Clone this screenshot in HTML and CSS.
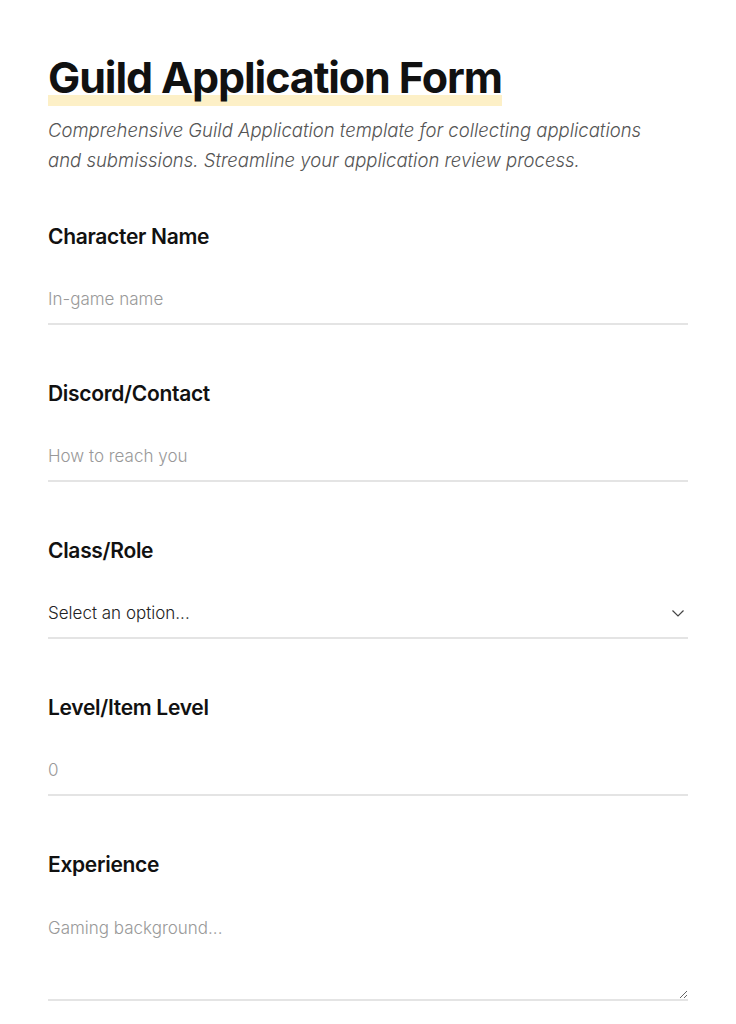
FILE: index.html
```html
<!DOCTYPE html>
<html lang="en">
<head>
    <meta charset="UTF-8">
    <meta name="viewport" content="width=device-width, initial-scale=1.0">
    <title>Guild Application Form</title>
    <link rel="stylesheet" href="styles.css">
</head>
<body>
    <div class="form-wrap">
        <h1 class="form-title"><span>Guild Application Form</span></h1>
        <p class="form-desc">Comprehensive Guild Application template for collecting applications and submissions. Streamline your application review process.</p>

        <form class="app-form">
            <div class="field">
                <label for="char-name">Character Name</label>
                <input type="text" id="char-name" placeholder="In-game name">
            </div>

            <div class="field">
                <label for="contact">Discord/Contact</label>
                <input type="text" id="contact" placeholder="How to reach you">
            </div>

            <div class="field">
                <label for="class-role">Class/Role</label>
                <div class="select-box">
                    <select id="class-role">
                        <option>Select an option...</option>
                        <option>Tank</option>
                        <option>Healer</option>
                        <option>DPS</option>
                    </select>
                    <svg class="chevron" width="14" height="14" viewBox="0 0 14 14"><path d="M1.5 4.5 L7 10 L12.5 4.5" fill="none" stroke="#444" stroke-width="1.2"/></svg>
                </div>
            </div>

            <div class="field">
                <label for="level">Level/Item Level</label>
                <input type="number" id="level" placeholder="0">
            </div>

            <div class="field">
                <label for="experience">Experience</label>
                <textarea id="experience" placeholder="Gaming background..."></textarea>
            </div>
        </form>
    </div>
</body>
</html>
```

FILE: styles.css
```css
body {
    margin: 0;
    background: #fff;
    font-family: Inter, "Noto Sans", sans-serif;
    color: #111;
}
.form-wrap {
    padding: 50px 48px;
}
.form-title {
    margin: 0;
    font-size: 43px;
    font-weight: 700;
    letter-spacing: -1.1px;
    line-height: 54px;
}
.form-title span {
    padding-bottom: 3px;
    background: linear-gradient(to top, #fdf0c7 11px, transparent 11px);
}
.form-desc {
    margin: 11px 0 0;
    max-width: 625px;
    font-size: 18.5px;
    font-style: italic;
    line-height: 30px;
    color: #555;
    font-weight: 300;
}
.app-form {
    margin-top: 47px;
}
.field {
    display: flex;
    flex-direction: column;
    margin-bottom: 54px;
}
.field label {
    font-size: 21px;
    font-weight: 600;
    letter-spacing: -0.3px;
    line-height: 30px;
}
.field input,
.field select,
.field textarea {
    font-family: inherit;
    font-size: 17px;
    font-weight: 300;
    color: #222;
    border: none;
    border-bottom: 2px solid #e4e4e4;
    outline: none;
    background: transparent;
    padding: 14px 0 14px;
    margin-top: 23px;
    width: 100%;
}
.field input::placeholder,
.field textarea::placeholder {
    color: #999;
}
.field input[type=number]::-webkit-inner-spin-button {
    -webkit-appearance: none;
}
.select-box {
    position: relative;
    margin-top: 23px;
}
.select-box select {
    margin-top: 0;
    -webkit-appearance: none;
    appearance: none;
}
.chevron {
    position: absolute;
    right: 3px;
    top: 17px;
}
.field textarea {
    height: 98px;
    padding-top: 15px;
    resize: vertical;
    box-sizing: border-box;
}
```
